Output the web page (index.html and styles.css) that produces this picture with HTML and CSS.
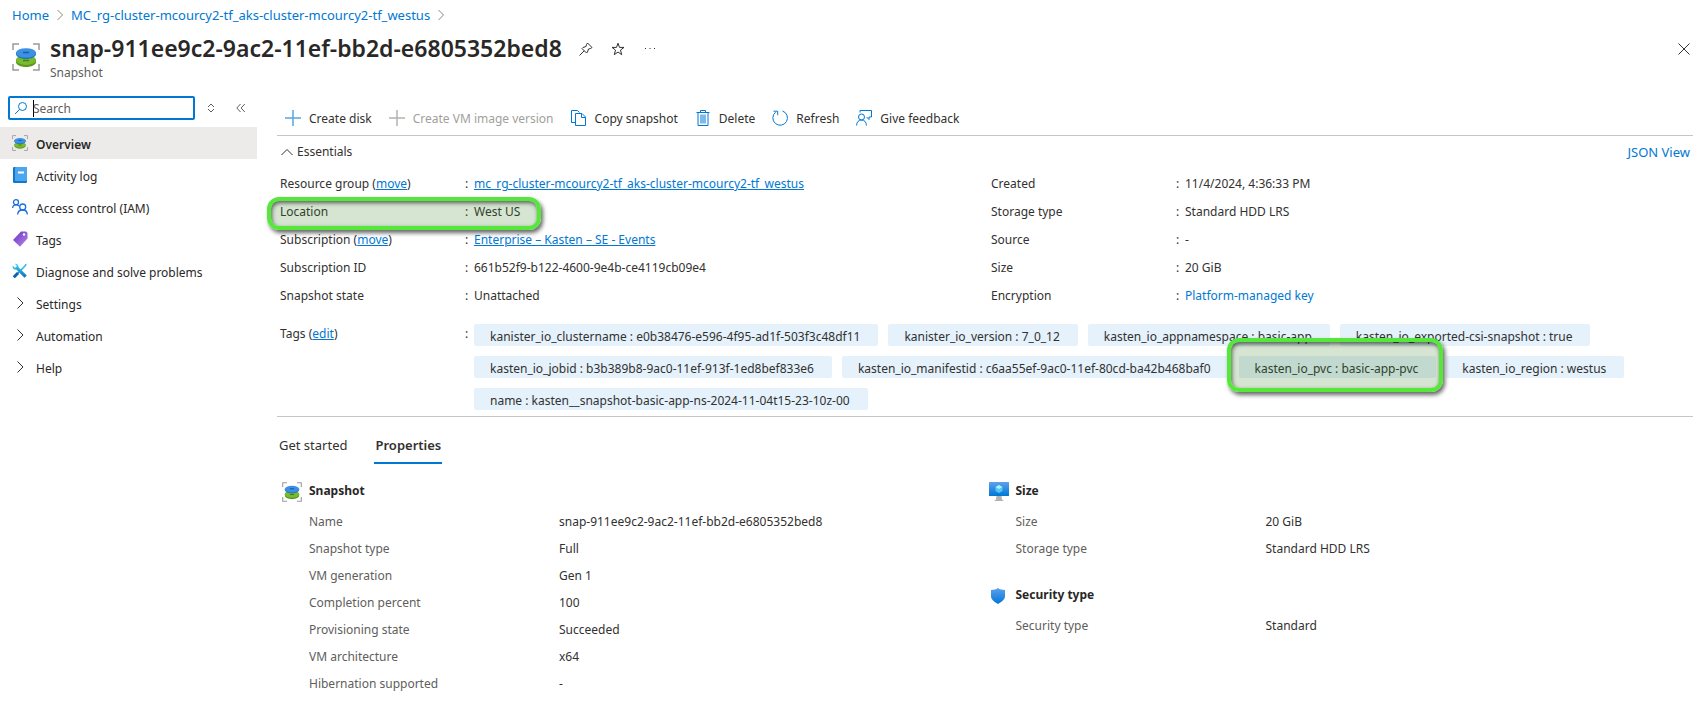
FILE: index.html
```html
<!DOCTYPE html>
<html lang="en">
<head>
<meta charset="utf-8">
<title>snap-911ee9c2-9ac2-11ef-bb2d-e6805352bed8 - Snapshot</title>
<link rel="stylesheet" href="styles.css">
</head>
<body>
<svg class="defs" aria-hidden="true">
  <defs>
    <linearGradient id="gBlue" x1="0" y1="0" x2="0" y2="1"><stop offset="0" stop-color="#5ea0ef"/><stop offset="1" stop-color="#0078d4"/></linearGradient>
    <linearGradient id="gPurple" x1="0" y1="0" x2="1" y2="1"><stop offset="0" stop-color="#6b2fc9"/><stop offset="1" stop-color="#b68be0"/></linearGradient>
    <linearGradient id="gTool" x1="0" y1="0" x2="0" y2="1"><stop offset="0" stop-color="#32d4f5"/><stop offset="1" stop-color="#0f6cbd"/></linearGradient>
  </defs>
  <symbol id="snapshot" viewBox="0 0 28 28">
    <path d="M1 7V1h6M21 1h6v6M27 21v6h-6M7 27H1v-6" fill="none" stroke="#9a9a9a" stroke-width="1.5"/>
    <path d="M4 16v3c0 2.800 4.500 5 10 5s10-2.200 10-5v-3z" fill="#5e9624"/>
    <ellipse cx="14" cy="17" rx="10" ry="5" fill="#76bc2d"/>
    <path d="M11 17.500h6" stroke="#4c7d1b" stroke-width="1.500"/>
    <path d="M4 9v2c0 2.800 4.500 5 10 5s10-2.200 10-5V9z" fill="#1f6fc0"/>
    <ellipse cx="14" cy="10" rx="10" ry="4.800" fill="#3c91e5"/>
    <path d="M11 9.500h6" stroke="#1b5ba0" stroke-width="1.500"/>
  </symbol>
</svg>

<header class="top">
  <nav class="crumbs" aria-label="Breadcrumb">
    <a href="#">Home</a>
    <svg width="6" height="12" viewBox="0 0 6 12"><path d="M.5 1 5.500 6 .5 11" class="line grey"/></svg>
    <a href="#">MC_rg-cluster-mcourcy2-tf_aks-cluster-mcourcy2-tf_westus</a>
    <svg width="6" height="12" viewBox="0 0 6 12"><path d="M.5 1 5.500 6 .5 11" class="line grey"/></svg>
  </nav>
  <div class="titlebar">
    <svg class="title-icon" width="28" height="28"><use href="#snapshot"/></svg>
    <div class="title-text">
      <h1>snap-911ee9c2-9ac2-11ef-bb2d-e6805352bed8</h1>
      <p>Snapshot</p>
    </div>
    <div class="title-actions">
      <button type="button" aria-label="Pin"><svg width="14" height="14" viewBox="0 0 14 14"><path d="M8.500 1 13 5.500 11.500 6.500 9.500 7 8.500 10 7.500 11 3 6.500 4 5.500 7 4.500 7.500 2.500zM5.200 8.800.5 13.500" class="line dark"/></svg></button>
      <button type="button" aria-label="Favorite"><svg width="14" height="14" viewBox="0 0 14 14"><path d="M7 1.200 8.500 5.400H13L9.500 8.100 10.700 12.700 7 10 3.300 12.700 4.500 8.100 1 5.400H5.500z" class="line dark"/></svg></button>
      <button type="button" aria-label="More"><svg width="14" height="14" viewBox="0 0 14 14"><path d="M2 6.500h1M6.500 6.500h1M11 6.500h1" class="line dark"/></svg></button>
    </div>
    <button type="button" class="close" aria-label="Close"><svg width="12" height="12" viewBox="0 0 12 12"><path d="M.5.5l11 11M11.500.5l-11 11" class="line dark"/></svg></button>
  </div>
</header>

<div class="body">
  <aside class="side">
    <div class="search-row">
      <label class="search">
        <svg width="14" height="14" viewBox="0 0 14 14"><circle cx="8.500" cy="5.500" r="4" class="line blue"/><path d="M5.500 8.500 1 13" class="line blue"/></svg>
        <span class="caret"></span>
        <input type="text" placeholder="Search" aria-label="Search">
      </label>
      <button type="button" aria-label="Expand all"><svg width="8" height="10" viewBox="0 0 8 10"><path d="M1 4 4 1l3 3M1 6l3 3 3-3" class="line mid"/></svg></button>
      <button type="button" aria-label="Collapse menu"><svg width="10" height="10" viewBox="0 0 10 10"><path d="M4.500 1 .8 5l3.700 4M8.800 1 5.100 5l3.700 4" class="line mid"/></svg></button>
    </div>
    <nav class="menu" aria-label="Resource menu">
      <a href="#" class="selected"><svg width="16" height="16"><use href="#snapshot"/></svg><span>Overview</span></a>
      <a href="#"><svg width="16" height="16" viewBox="0 0 16 16"><rect x="1" y="0" width="14" height="16" rx="1" fill="#1378cc"/><rect x="3" y="0" width="12" height="14" rx="1" fill="#4ba7ee"/><path d="M6 5.500h6" stroke="#fff" stroke-width="2"/></svg><span>Activity log</span></a>
      <a href="#"><svg width="16" height="16" viewBox="0 0 16 16"><circle cx="4" cy="3.200" r="2.500" class="line iam"/><path d="M.7 9C.7 7 2 5.800 4 5.800c1.300 0 2.200.4 2.900 1.200" class="line iam"/><circle cx="10.700" cy="8" r="3" class="line iam"/><path d="M5.700 15.500c0-2.800 2-4.500 5-4.500s4.600 1.700 4.600 4.500" class="line iam"/></svg><span>Access control (IAM)</span></a>
      <a href="#"><svg width="16" height="16" viewBox="0 0 16 16"><path d="M9 .5h5l1.500 1.500v5.500L8 15.700 1 9z" fill="url(#gPurple)"/><circle cx="12" cy="3.500" r="1.200" fill="#fff"/></svg><span>Tags</span></a>
      <a href="#"><svg width="16" height="16" viewBox="0 0 16 16"><path d="M2 14 14 2" stroke="url(#gTool)" stroke-width="1.600"/><path d="M1.800 14.200 6 10" stroke="#0f5fae" stroke-width="3"/><path d="M15.500.5 13 1.500 12.500 3z" fill="#1c86c9"/><path d="M.8 2.800 3 5l2-2L2.800.8C4.500.2 6.700 1.500 6.500 4.200L14.800 12.500 12.500 14.800 4.200 6.500C2 7 0 5 .8 2.800z" fill="url(#gTool)"/></svg><span>Diagnose and solve problems</span></a>
      <a href="#"><svg width="16" height="16" viewBox="0 0 16 16"><path d="M5.500 2.500 11 8l-5.500 5.500" class="line dark"/></svg><span>Settings</span></a>
      <a href="#"><svg width="16" height="16" viewBox="0 0 16 16"><path d="M5.500 2.500 11 8l-5.500 5.500" class="line dark"/></svg><span>Automation</span></a>
      <a href="#"><svg width="16" height="16" viewBox="0 0 16 16"><path d="M5.500 2.500 11 8l-5.500 5.500" class="line dark"/></svg><span>Help</span></a>
    </nav>
  </aside>

  <main class="main">
    <div class="toolbar">
      <button type="button"><svg width="16" height="16" viewBox="0 0 16 16"><path d="M8 0v16M0 8h16" stroke="#58a6e2" stroke-width="1.500"/></svg><span>Create disk</span></button>
      <button type="button" disabled><svg width="16" height="16" viewBox="0 0 16 16"><path d="M8 0v16M0 8h16" stroke="#b5b3b1" stroke-width="1.500"/></svg><span>Create VM image version</span></button>
      <button type="button"><svg width="16" height="16" viewBox="0 0 16 16"><path d="M4.500 12.500h-4V.5h6l2 2M4.500 3.500H11L14.500 7v8.500h-10zM10.500 3.500v4h4" class="line blue"/></svg><span>Copy snapshot</span></button>
      <button type="button"><svg width="16" height="16" viewBox="0 0 16 16"><path d="M1.500 2.500h13M5.500 2.500v-2h5v2M3 2.500v13h10v-13" class="line blue"/><rect x="5" y="4.500" width="6" height="9" fill="#7db9ea"/></svg><span>Delete</span></button>
      <button type="button"><svg width="16" height="16" viewBox="0 0 16 16"><path d="M10.500 1A7.300 7.300 0 1 1 3.600 2.200M1.500 1.200h4.200v4" class="line blue"/></svg><span>Refresh</span></button>
      <button type="button"><svg width="16" height="16" viewBox="0 0 16 16"><circle cx="5.500" cy="7" r="3" class="line blue"/><path d="M.6 15.500C.6 12 2.600 10 5.500 10s4.900 2 4.900 5.500M4 2.500v-2h11.500V7H13v2.500L10.500 7" class="line blue"/></svg><span>Give feedback</span></button>
    </div>

    <section class="essentials">
      <div class="ess-head">
        <button type="button"><svg width="12" height="8" viewBox="0 0 12 8"><path d="M.5 7 6 1.500 11.500 7" class="line dark"/></svg>Essentials</button>
        <a href="#">JSON View</a>
      </div>
      <div class="ess-grid">
        <dl class="pairs">
          <div><dt>Resource group (<a href="#">move</a>)</dt><dd><a href="#">mc_rg-cluster-mcourcy2-tf_aks-cluster-mcourcy2-tf_westus</a></dd></div>
          <div class="marked"><dt>Location</dt><dd>West US</dd><span class="mark mark-location"></span></div>
          <div><dt>Subscription (<a href="#">move</a>)</dt><dd><a href="#">Enterprise – Kasten – SE - Events</a></dd></div>
          <div><dt>Subscription ID</dt><dd>661b52f9-b122-4600-9e4b-ce4119cb09e4</dd></div>
          <div><dt>Snapshot state</dt><dd>Unattached</dd></div>
        </dl>
        <dl class="pairs">
          <div><dt>Created</dt><dd>11/4/2024, 4:36:33 PM</dd></div>
          <div><dt>Storage type</dt><dd>Standard HDD LRS</dd></div>
          <div><dt>Source</dt><dd>-</dd></div>
          <div><dt>Size</dt><dd>20 GiB</dd></div>
          <div><dt>Encryption</dt><dd><a href="#" class="plain">Platform-managed key</a></dd></div>
        </dl>
      </div>
      <dl class="pairs tags">
        <div>
          <dt>Tags (<a href="#">edit</a>)</dt>
          <dd>
            <ul class="chips">
              <li>kanister_io_clustername : e0b38476-e596-4f95-ad1f-503f3c48df11</li>
              <li>kanister_io_version : 7_0_12</li>
              <li>kasten_io_appnamespace : basic-app</li>
              <li>kasten_io_exported-csi-snapshot : true</li>
              <li>kasten_io_jobid : b3b389b8-9ac0-11ef-913f-1ed8bef833e6</li>
              <li>kasten_io_manifestid : c6aa55ef-9ac0-11ef-80cd-ba42b468baf0</li>
              <li class="marked">kasten_io_pvc : basic-app-pvc<span class="mark mark-pvc"></span></li>
              <li>kasten_io_region : westus</li>
              <li>name : kasten__snapshot-basic-app-ns-2024-11-04t15-23-10z-00</li>
            </ul>
          </dd>
        </div>
      </dl>
    </section>

    <div class="tabs" role="tablist">
      <button type="button" role="tab" aria-selected="false">Get started</button>
      <button type="button" role="tab" aria-selected="true">Properties</button>
    </div>

    <div class="props">
      <section>
        <h2><svg width="20" height="20"><use href="#snapshot"/></svg>Snapshot</h2>
        <dl>
          <div><dt>Name</dt><dd>snap-911ee9c2-9ac2-11ef-bb2d-e6805352bed8</dd></div>
          <div><dt>Snapshot type</dt><dd>Full</dd></div>
          <div><dt>VM generation</dt><dd>Gen 1</dd></div>
          <div><dt>Completion percent</dt><dd>100</dd></div>
          <div><dt>Provisioning state</dt><dd>Succeeded</dd></div>
          <div><dt>VM architecture</dt><dd>x64</dd></div>
          <div><dt>Hibernation supported</dt><dd>-</dd></div>
        </dl>
      </section>
      <div class="props-col">
        <section>
          <h2><svg width="20" height="20" viewBox="0 0 20 20"><path d="M7.500 14h5l.5 3.500 2 1.500H5l2-1.500z" fill="#b3b3b3"/><rect y="0" width="20" height="14" rx=".5" fill="url(#gBlue)"/><path d="M10 3l3.500 2v4L10 11 6.500 9V5z" fill="#50c8f5"/><path d="M10 3l3.500 2L10 7 6.500 5z" fill="#b5edff"/></svg>Size</h2>
          <dl>
            <div><dt>Size</dt><dd>20 GiB</dd></div>
            <div><dt>Storage type</dt><dd>Standard HDD LRS</dd></div>
          </dl>
        </section>
        <section>
          <h2><svg width="20" height="20" viewBox="0 0 20 20"><path d="M9 2c2 1.500 4 1.500 7 2v6c0 4-4 6-7 8-3-2-7-4-7-8V4c3-.5 5-.5 7-2z" fill="url(#gBlue)"/></svg>Security type</h2>
          <dl>
            <div><dt>Security type</dt><dd>Standard</dd></div>
          </dl>
        </section>
      </div>
    </div>
  </main>
</div>
</body>
</html>
```
FILE: styles.css
```css
* { box-sizing: border-box; }

body {
  margin: 0;
  background: #fff;
  color: #323130;
  font: 12px/16px "Noto Sans", "Open Sans", sans-serif;
}

a { color: #0078d4; text-decoration: none; }
h1, h2, p, dl, dd, ul { margin: 0; padding: 0; }
ul { list-style: none; }
svg { flex: none; display: block; }

button {
  margin: 0;
  padding: 0;
  border: 0;
  background: none;
  color: inherit;
  font: inherit;
  cursor: pointer;
}

.defs { position: absolute; width: 0; height: 0; }

.line { fill: none; stroke-width: 1; }
.grey { stroke: #8a8886; }
.mid { stroke: #605e5c; }
.dark { stroke: #323130; }
.blue { stroke: #0078d4; }
.iam { stroke: #1a6fe0; stroke-width: 1.3; }

/* Header */
.crumbs {
  display: flex;
  align-items: center;
  gap: 8px;
  padding: 7px 12px 0;
  font-size: 13px;
}

.titlebar { display: flex; padding: 12px 3px 0 12px; }
.title-icon { margin-top: 8px; }
.title-text { margin-left: 10px; }
.title-text h1 { font-size: 23px; line-height: 26px; font-weight: 600; color: #292827; }
.title-text p { margin-top: 4px; color: #605e5c; }
.title-actions { display: flex; gap: 18px; height: 28px; margin-left: 17px; align-items: center; }
.close { height: 28px; margin-left: auto; }

/* Layout */
.body { display: flex; margin-top: 15px; }
.side { flex: 0 0 257px; }
.main { flex: 1; min-width: 0; margin-left: 20px; }

/* Side menu */
.search-row { display: flex; align-items: center; padding-left: 8px; }

.search {
  display: flex;
  align-items: center;
  width: 187px;
  height: 24px;
  padding-left: 4px;
  border: 2px solid #0078d4;
  border-radius: 2px;
}

.caret { width: 1px; height: 17px; margin: 0 -1px 0 5px; background: #000; }

.search input {
  flex: 1;
  min-width: 0;
  padding: 1px 0 0;
  border: 0;
  outline: 0;
  background: none;
  font: inherit;
}

.search input::placeholder { color: #605e5c; }
.search-row button { margin-left: 12px; }
.search-row button + button { margin-left: 21px; }

.menu { display: flex; flex-direction: column; margin-top: 7px; }

.menu a {
  display: flex;
  align-items: center;
  gap: 8px;
  height: 32px;
  padding-left: 12px;
  color: #292827;
}

.menu span { padding-top: 3px; }
.menu .selected { background: #edebe9; font-weight: 600; }

/* Command bar */
.toolbar {
  display: flex;
  gap: 17px;
  height: 40px;
  padding: 4px 8px 0;
  border-bottom: 1px solid #c8c6c4;
}

.toolbar button { display: flex; align-items: center; gap: 8px; }
.toolbar span { padding-top: 2px; }
.toolbar button:disabled { color: #a19f9d; }

/* Essentials */
.essentials { padding-bottom: 6px; border-bottom: 1px solid #c8c6c4; }
.ess-head { display: flex; justify-content: space-between; padding: 8px 3px 10px 4px; }
.ess-head button { display: flex; align-items: center; gap: 4px; }
.ess-head a { font-size: 13px; }
.ess-grid { display: grid; grid-template-columns: 1fr 1fr; gap: 6px; }
.pairs { padding-left: 3px; }
.pairs > div { display: flex; line-height: 28px; }
.pairs dt { flex: 0 0 185px; }
.pairs dd { flex: 1; display: flex; }
.pairs dd::before { content: ":"; flex: 0 0 9px; }
.pairs a:not(.plain) { text-decoration: underline; }

.tags { margin-top: 10px; }
.chips { display: flex; flex-wrap: wrap; gap: 10px; padding-top: 4px; }

.chips li {
  height: 22px;
  padding: 2px 18px 0 16px;
  border-radius: 2px;
  background: #e5f1fb;
  line-height: 22px;
}

/* Call-out frames */
.marked { position: relative; }

.mark {
  position: absolute;
  border: 4px solid #55e83a;
  border-radius: 12px;
  background: rgba(52, 127, 30, 0.2);
  box-shadow: 2px 3px 4px rgba(0, 0, 0, 0.6), inset 1px 2px 4px rgba(0, 0, 0, 0.6);
  pointer-events: none;
}

.mark-location { left: -13px; top: -1px; width: 274px; height: 33px; }
.mark-pvc { inset: -18px -7px -14px -12px; }

/* Tabs */
.tabs { display: flex; gap: 26px; margin-top: 13px; padding-left: 1px; font-size: 13px; }
.tabs button { padding: 0 1px 2px; line-height: 30px; border-bottom: 2px solid transparent; }
.tabs [aria-selected="true"] { border-color: #0078d4; font-weight: 600; }

/* Properties */
.props { display: grid; grid-template-columns: 1fr 1fr; column-gap: 2px; margin-top: 16px; padding-left: 5px; }
.props-col { display: flex; flex-direction: column; gap: 22px; }
.props h2 { display: flex; gap: 7px; height: 24px; font-size: 12px; line-height: 22px; color: #292827; }
.props h2 svg { margin-top: 2px; }
.props dl { margin-top: 4px; padding-left: 27px; }
.props dl div { display: flex; line-height: 27px; }
.props dt { flex: 0 0 250px; color: #605e5c; }
```
